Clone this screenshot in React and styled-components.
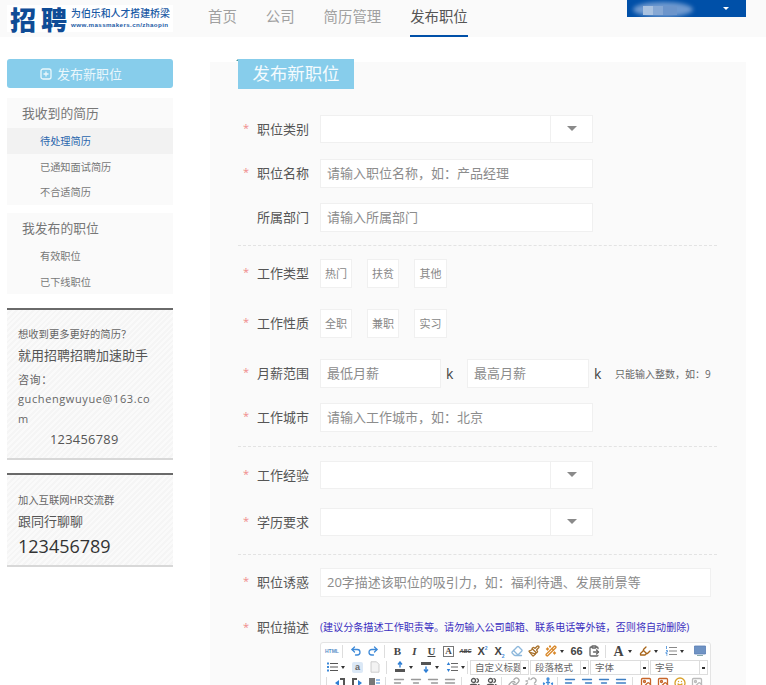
import styled, { createGlobalStyle } from "styled-components";
import {
  Undo2, Redo2, Eraser, Paintbrush, Wand2, ClipboardPaste, Highlighter, AlignLeft, AlignCenter,
  AlignRight, AlignJustify, Link, Unlink, Anchor, Smile, Image, Users,
} from "lucide-react";

const GlobalStyle = createGlobalStyle`
  html, body {
    margin: 0;
    padding: 0;
    background: #fff;
    overflow: hidden;
  }
  body {
    font-family: "Open Sans", "Noto Sans CJK SC", sans-serif;
    color: #555;
  }
  * { box-sizing: border-box; }
`;

const blue = "#0050a8";
const sky = "#87cdeb";

// toolbar drawings the icon packages have no match for
const BulletList = () => (
  <svg viewBox="0 0 12 12">
    <path d="M4 2.5h8M4 6h8M4 9.5h8" stroke="#555" strokeWidth="1" fill="none" />
    <path d="M1 1.5h2v2H1zM1 5h2v2H1zM1 8.5h2v2H1z" fill="#3f8ad8" stroke="none" />
  </svg>
);

const NumberList = () => (
  <svg viewBox="0 0 12 12">
    <path d="M4 2.5h8M4 6h8M4 9.5h8" stroke="#888" strokeWidth="1" fill="none" />
    <path d="M1.5 1v3M1 5.5h1.5v1.5H1v1.5h1.5M1 10h1.5" stroke="#3f8ad8" strokeWidth=".8" fill="none" />
  </svg>
);

const SpaceBefore = () => (
  <svg viewBox="0 0 12 12">
    <path d="M1 8h10v3H1z" fill="#555" stroke="none" />
    <path d="M6 6.5V2M4 3.5 6 1l2 2.5" stroke="#2f7fd4" strokeWidth="1.4" fill="none" />
  </svg>
);

const SpaceAfter = () => (
  <svg viewBox="0 0 12 12">
    <path d="M1 1h10v3H1z" fill="#555" stroke="none" />
    <path d="M6 5.500V10M4 8.500 6 11l2-2.500" stroke="#2f7fd4" strokeWidth="1.4" fill="none" />
  </svg>
);

const LineSpace = () => (
  <svg viewBox="0 0 12 12">
    <path d="M5 2.500h7M5 6h7M5 9.500h7" stroke="#666" strokeWidth="1" fill="none" />
    <path d="M2.500 1 4.200 4H.8zM2.500 11 .8 8h3.400z" fill="#2f7fd4" stroke="none" />
  </svg>
);

const Screen = () => (
  <svg viewBox="0 0 12 12">
    <path d="M.5 1h11v8H.5z" fill="#6f93c4" stroke="#5a7fb5" strokeWidth=".8" />
    <path d="M3 10.500h6" stroke="#8aa" strokeWidth="1" fill="none" />
  </svg>
);

const Sheet = () => (
  <svg viewBox="0 0 12 12">
    <path d="M2 .8h5.500L10 3.300v7.900H2z" fill="#f3f3f3" stroke="#c8c8c8" strokeWidth=".9" />
  </svg>
);

const Indent = ({ flip }) => (
  <svg viewBox="0 0 12 12">
    <path d="M6 1h5v10H9V3H6z" fill="#555" stroke="none" transform={flip ? "matrix(-1 0 0 1 12 0)" : undefined} />
    <path d={flip ? "M11 6 7 3v6z" : "M1 6 5 3v6z"} fill="#2f7fd4" stroke="none" />
  </svg>
);

const Block = () => (
  <svg viewBox="0 0 12 12">
    <path d="M1 1h6v10H1z" fill="#777" stroke="none" />
    <path d="M8 3h4M8 6h4M8 9h4" stroke="#2f7fd4" strokeWidth="1" fill="none" />
  </svg>
);

function App() {
  return (
    <Page>
      <GlobalStyle />
      <Header>
        <Logo>
          <LogoMark>招聘</LogoMark>
          <LogoText>
            <strong>为伯乐和人才搭建桥梁</strong>
            <small>www.massmakers.cn/zhaopin</small>
          </LogoText>
        </Logo>
        <Nav>
          <NavItem>首页</NavItem>
          <NavItem>公司</NavItem>
          <NavItem>简历管理</NavItem>
          <NavItem $active>发布职位</NavItem>
        </Nav>
        <UserBox>
          <UserSmudge />
          <UserPixels />
          <Caret />
        </UserBox>
      </Header>

      <Body>
        <Sidebar>
          <PublishButton>
            <svg width="12" height="12" viewBox="0 0 12 12" fill="none" stroke="#eaf7fc" strokeWidth="1.3">
              <rect x="1" y="1" width="10" height="10" rx="2" />
              <path d="M3.5 6h5M6 3.5v5" />
            </svg>
            发布新职位
          </PublishButton>

          <MenuGroup>
            <MenuTitle>我收到的简历</MenuTitle>
            <MenuItem $active>待处理简历</MenuItem>
            <MenuItem>已通知面试简历</MenuItem>
            <MenuItem>不合适简历</MenuItem>
          </MenuGroup>
          <MenuGroup>
            <MenuTitle>我发布的职位</MenuTitle>
            <MenuItem>有效职位</MenuItem>
            <MenuItem>已下线职位</MenuItem>
          </MenuGroup>

          <PromoCard>
            <PromoSmall>想收到更多更好的简历？</PromoSmall>
            <PromoLine>就用招聘招聘加速助手</PromoLine>
            <Contact>
              <ContactLabel>咨询：</ContactLabel>
              guchengwuyue@163.com
              <ContactPhone>123456789</ContactPhone>
            </Contact>
          </PromoCard>
          <PromoCard $second>
            <PromoSmall>加入互联网HR交流群</PromoSmall>
            <PromoLine>跟同行聊聊</PromoLine>
            <BigNumber>123456789</BigNumber>
          </PromoCard>
        </Sidebar>

        <Main>
          <TitleTab>发布新职位</TitleTab>

          <Row $top={26}>
            <Label $required>职位类别</Label>
            <SelectField />
          </Row>
          <Row $top={16}>
            <Label $required>职位名称</Label>
            <Input $width={273} placeholder="请输入职位名称，如：产品经理" />
          </Row>
          <Row $top={15}>
            <Label>所属部门</Label>
            <Input $width={273} placeholder="请输入所属部门" />
          </Row>
          <Divider $before={13} $after={13} />

          <Row>
            <Label $required>工作类型</Label>
            <Tags>
              <Tag>热门</Tag>
              <Tag>扶贫</Tag>
              <Tag $wide>其他</Tag>
            </Tags>
          </Row>
          <Row $top={21}>
            <Label $required>工作性质</Label>
            <Tags>
              <Tag>全职</Tag>
              <Tag>兼职</Tag>
              <Tag $wide>实习</Tag>
            </Tags>
          </Row>
          <Row $top={21}>
            <Label $required>月薪范围</Label>
            <Input $width={121} placeholder="最低月薪" />
            <Unit>k</Unit>
            <Input $width={122} placeholder="最高月薪" />
            <Unit>k</Unit>
            <Hint>只能输入整数，如：9</Hint>
          </Row>
          <Row $top={15}>
            <Label $required>工作城市</Label>
            <Input $width={273} placeholder="请输入工作城市，如：北京" />
          </Row>
          <Divider $before={14} $after={14} />

          <Row>
            <Label $required>工作经验</Label>
            <SelectField />
          </Row>
          <Row $top={19}>
            <Label $required>学历要求</Label>
            <SelectField />
          </Row>
          <Divider $before={18} $after={13} />

          <Row>
            <Label $required>职位诱惑</Label>
            <Input $width={391} placeholder="20字描述该职位的吸引力，如：福利待遇、发展前景等" />
          </Row>

          <DescribeRow>
            <Label $required>职位描述</Label>
            <DescribeBody>
              <DescribeHint>(建议分条描述工作职责等。请勿输入公司邮箱、联系电话等外链，否则将自动删除)</DescribeHint>
              <Editor>
                <ToolRow>
                  <HtmlTag>HTML</HtmlTag>
                  <Sep />
                  <Tool $c="#3f8ad8"><Undo2 /></Tool>
                  <Tool $c="#3f8ad8"><Redo2 /></Tool>
                  <Sep />
                  <Letter>B</Letter>
                  <Letter $italic>I</Letter>
                  <Letter $underline>U</Letter>
                  <Tool><BoxedA>A</BoxedA></Tool>
                  <Tool><Strike>ABC</Strike></Tool>
                  <Letter $sans>X<sup>2</sup></Letter>
                  <Letter $sans>X<sub>2</sub></Letter>
                  <Tool $c="#8db8dc"><Eraser /></Tool>
                  <Tool $c="#a8702a"><Paintbrush /></Tool>
                  <Tool $c="#d9892b"><Wand2 /></Tool>
                  <Drop />
                  <Letter $sans>66</Letter>
                  <Tool $c="#666"><ClipboardPaste /></Tool>
                  <Sep />
                  <Letter $large>A</Letter>
                  <Drop />
                  <Tool $c="#a8651a"><Highlighter /></Tool>
                  <Drop />
                  <Tool><NumberList /></Tool>
                  <Drop />
                  <Tool $push><Screen /></Tool>
                </ToolRow>
                <ToolRow>
                  <Tool><BulletList /></Tool>
                  <Drop />
                  <Tool><SmallA>a</SmallA></Tool>
                  <Tool><Sheet /></Tool>
                  <Sep />
                  <Tool><SpaceBefore /></Tool>
                  <Drop />
                  <Tool><SpaceAfter /></Tool>
                  <Drop />
                  <Tool><LineSpace /></Tool>
                  <Drop $end />
                  <Sep $tight />
                  <ToolSelects>
                    <ToolSelect>自定义标题</ToolSelect>
                    <ToolSelect>段落格式</ToolSelect>
                    <ToolSelect>字体</ToolSelect>
                    <ToolSelect $narrow>字号</ToolSelect>
                  </ToolSelects>
                </ToolRow>
                <ToolRow>
                  <Sep $flush />
                  <Tool><Indent /></Tool>
                  <Tool><Indent flip /></Tool>
                  <Tool><Block /></Tool>
                  <Sep />
                  <Tool $c="#999"><AlignLeft /></Tool>
                  <Tool $c="#999"><AlignCenter /></Tool>
                  <Tool $c="#999"><AlignRight /></Tool>
                  <Tool $c="#999"><AlignJustify /></Tool>
                  <Sep />
                  <Tool $c="#555"><Users /></Tool>
                  <Tool $c="#555"><Users /></Tool>
                  <Sep $tight />
                  <Tool $c="#aaa"><Link /></Tool>
                  <Tool $c="#aaa"><Unlink /></Tool>
                  <Tool $c="#3f8ad8"><Anchor /></Tool>
                  <Sep $tight />
                  <Tool $c="#3f7fc4"><AlignLeft /></Tool>
                  <Tool $c="#3f7fc4"><AlignRight /></Tool>
                  <Tool $c="#3f7fc4"><AlignCenter /></Tool>
                  <Tool $c="#3f7fc4"><AlignJustify /></Tool>
                  <Sep />
                  <Tool $c="#c8662a"><Image /></Tool>
                  <Tool $c="#c8662a"><Image /></Tool>
                  <Tool $c="#d9a12b"><Smile /></Tool>
                  <Tool $c="#bbb"><Image /></Tool>
                </ToolRow>
              </Editor>
            </DescribeBody>
          </DescribeRow>
        </Main>
      </Body>
    </Page>
  );
}

export default App;

const Page = styled.div`
  width: 766px;
  height: 685px;
  overflow: hidden;
  background: #fff;
`;

const Header = styled.header`
  display: flex;
  align-items: flex-start;
  height: 37px;
  padding: 0 20px 0 7px;
  background: #fafafa;
`;

const Logo = styled.div`
  display: flex;
  align-items: center;
  width: 166px;
  height: 27px;
  margin-top: 5px;
  padding-left: 3px;
  background: #fff;
`;

const LogoMark = styled.div`
  font-family: "Noto Sans CJK SC", sans-serif;
  font-size: 26px;
  font-weight: 900;
  letter-spacing: 5px;
  line-height: 27px;
  color: #0f4c96;
`;

const LogoText = styled.div`
  display: flex;
  flex-direction: column;
  margin-left: -1px;
  color: #1a5aa5;
  line-height: 1;

  strong {
    font-family: "Noto Sans CJK SC", sans-serif;
    font-size: 9.9px;
    font-weight: 500;
    white-space: nowrap;
  }

  small {
    margin-top: 3px;
    font-family: "Liberation Sans", sans-serif;
    font-size: 6.2px;
    font-weight: 700;
    letter-spacing: 0.4px;
    white-space: nowrap;
  }
`;

const Nav = styled.nav`
  display: flex;
  gap: 29px;
  margin-left: 35px;
`;

const NavItem = styled.a`
  display: block;
  height: 37px;
  padding-top: 6px;
  font-size: 14.4px;
  line-height: 21px;
  color: ${(p) => (p.$active ? "#555" : "#a0a0a0")};
  border-bottom: 2px solid ${(p) => (p.$active ? blue : "transparent")};
`;

const UserBox = styled.div`
  position: relative;
  width: 119px;
  height: 17px;
  margin-left: auto;
  overflow: hidden;
  background: ${blue};
`;

const UserSmudge = styled.div`
  position: absolute;
  left: 6px;
  top: 2px;
  width: 60px;
  height: 15px;
  border-radius: 50%;
  background: #6f9ad0;
  filter: blur(2px);
`;

const UserPixels = styled.div`
  position: absolute;
  left: 16px;
  top: 6px;
  width: 34px;
  height: 9px;
  background: linear-gradient(90deg, #a9c2e0 0 30%, #86a8d4 30% 60%, #6c95cb 60%);
`;

const Caret = styled.i`
  position: absolute;
  left: 96px;
  top: 7px;
  border: 3px solid transparent;
  border-top: 3px solid #fff;
`;

const Body = styled.div`
  display: flex;
  align-items: flex-start;
  gap: 37px;
  padding: 22px 0 0 7px;
`;

const Sidebar = styled.aside`
  flex: none;
  width: 166px;
`;

const PublishButton = styled.button`
  display: flex;
  align-items: center;
  gap: 5px;
  width: 100%;
  height: 29px;
  padding: 0 0 0 33px;
  border: 0;
  border-radius: 3px;
  background: ${sky};
  color: #eaf7fc;
  font-family: inherit;
  font-size: 13px;
`;

const MenuGroup = styled.div`
  margin-top: 10px;
  background: #fafafa;

  & + & {
    margin-top: 8px;
  }
`;

const MenuTitle = styled.div`
  height: 30px;
  padding-left: 15px;
  font-size: 12.8px;
  line-height: 30px;
  color: #777;
`;

const MenuItem = styled.div`
  height: 25.67px;
  padding-left: 33px;
  font-size: 10.2px;
  line-height: 26px;
  color: ${(p) => (p.$active ? "#2a66ad" : "#777")};
  background: ${(p) => (p.$active ? "#f2f2f2" : "transparent")};
`;

const PromoCard = styled.div`
  margin-top: ${(p) => (p.$second ? "13px" : "14px")};
  height: ${(p) => (p.$second ? "94px" : "152px")};
  padding: ${(p) => (p.$second ? "17px 0 0 11px" : "16px 0 0 11px")};
  border-top: 2px solid #6a6a6a;
  border-bottom: 2px solid #d8d8d8;
  background: repeating-linear-gradient(135deg, #fafafa 0 2px, #f5f5f5 2px 4px);
`;

const PromoSmall = styled.div`
  font-size: 10.3px;
  line-height: 16px;
  color: #666;
`;

const PromoLine = styled.div`
  margin-top: 3px;
  font-size: 13px;
  line-height: 20px;
  color: #555;
`;

const Contact = styled.div`
  width: 140px;
  margin-top: 5px;
  font-size: 11px;
  line-height: 20px;
  color: #666;
  letter-spacing: 0.6px;
  word-break: break-all;
`;

const ContactLabel = styled.div`
  height: 19px;
  overflow: hidden;
`;

const ContactPhone = styled.div`
  padding-left: 32px;
  font-size: 12.8px;
  letter-spacing: 0.3px;
  color: #555;
`;

const BigNumber = styled.div`
  margin-top: 2px;
  font-size: 18px;
  line-height: 26px;
  color: #333;
`;

const Main = styled.main`
  flex: none;
  width: 536px;
  height: 640px;
  margin-top: 3px;
  padding: 0 29px 0 28px;
  background: #fafafa;
`;

const TitleTab = styled.h2`
  position: relative;
  width: 116px;
  height: 30px;
  margin: -3px 0 0;
  background: ${sky};
  color: #f4fbfe;
  font-size: 17.4px;
  font-weight: 400;
  line-height: 29px;
  text-align: center;

  &::before {
    content: "";
    position: absolute;
    left: -2px;
    top: 0;
    border-right: 2px solid #4f9a9a;
    border-top: 2px solid transparent;
  }
`;

const Row = styled.div`
  display: flex;
  align-items: center;
  margin-top: ${(p) => p.$top || 0}px;
`;

const Label = styled.label`
  position: relative;
  flex: none;
  width: 82px;
  padding: 0 0 2px 19px;
  font-size: 13px;
  white-space: nowrap;
  color: #555;

  &::before {
    content: ${(p) => (p.$required ? '"*"' : '""')};
    position: absolute;
    left: 5px;
    top: 1px;
    color: #f08a8a;
    font-size: 11px;
  }
`;

const Input = styled.input`
  flex: none;
  width: ${(p) => p.$width}px;
  height: 29px;
  padding: 0 6px 1px;
  border: 1px solid #f0f0f0;
  background: #fff;
  font-family: inherit;
  font-size: 13px;
  color: #555;
  outline: none;

  &::placeholder {
    color: #8c8c8c;
    opacity: 1;
  }
`;

function SelectField() {
  return (
    <SelectWrap>
      <SelectValue />
      <SelectButton>
        <i />
      </SelectButton>
    </SelectWrap>
  );
}

const SelectWrap = styled.div`
  display: flex;
  width: 273px;
  height: 28px;
  border: 1px solid #f0f0f0;
  background: #fff;
`;

const SelectValue = styled.div`
  flex: 1;
  border-right: 1px solid #f0f0f0;
`;

const SelectButton = styled.div`
  display: flex;
  align-items: center;
  justify-content: center;
  width: 41px;

  i {
    margin-top: 4px;
    border: 5px solid transparent;
    border-top: 5px solid #8a8a8a;
  }
`;

const Divider = styled.div`
  margin: ${(p) => p.$before}px 0 ${(p) => p.$after}px;
  border-top: 1px dashed #e3e3e3;
`;

const Tags = styled.div`
  display: flex;
  gap: 15px;
`;

const Tag = styled.div`
  width: ${(p) => (p.$wide ? "33px" : "32px")};
  height: 29px;
  border: 1px solid #f0f0f0;
  background: #fff;
  font-size: 11px;
  line-height: 27px;
  text-align: center;
  color: #888;
`;

const Unit = styled.span`
  flex: none;
  width: 26px;
  padding-left: 5px;
  font-size: 14px;
  color: #444;
`;

const Hint = styled.span`
  font-size: 10px;
  color: #666;
  white-space: nowrap;
`;

const DescribeRow = styled.div`
  display: flex;
  margin-top: 23px;

  ${Label} {
    padding-bottom: 0;
    line-height: 14px;

    &::before {
      top: 0;
    }
  }
`;

const DescribeBody = styled.div`
  flex: none;
  width: 391px;
`;

const DescribeHint = styled.div`
  font-size: 10.1px;
  line-height: 14px;
  color: #3a2fc0;
  white-space: nowrap;
`;

const Editor = styled.div`
  margin-top: 8px;
  padding: 0 3px;
  border: 1px solid #e4e4e4;
  border-radius: 3px;
  background: #fff;
`;

const ToolRow = styled.div`
  display: flex;
  align-items: center;
  gap: 2px;
  height: 16px;
  white-space: nowrap;
`;

const Tool = styled.span`
  display: flex;
  flex: none;
  align-items: center;
  justify-content: center;
  width: 15px;
  height: 15px;
  margin-left: ${(p) => (p.$push ? "auto" : "0")};
  color: ${(p) => p.$c || "#444"};

  svg {
    width: 12px;
    height: 12px;
    stroke-width: 2.6;
  }
`;

const Letter = styled.span`
  flex: none;
  width: 15px;
  font-family: ${(p) => (p.$sans ? '"Liberation Sans"' : '"Liberation Serif"')}, sans-serif;
  font-size: ${(p) => (p.$large ? "14px" : "11px")};
  font-style: ${(p) => (p.$italic ? "italic" : "normal")};
  font-weight: 700;
  line-height: 15px;
  text-align: center;
  text-decoration: ${(p) => (p.$underline ? "underline" : "none")};
  color: #444;

  sup, sub {
    font-size: 5px;
    line-height: 0;
    color: #3f8ad8;
  }
`;

const HtmlTag = styled.span`
  flex: none;
  width: 13px;
  margin-left: 1px;
  font-family: "Liberation Sans", sans-serif;
  font-size: 5px;
  font-weight: 700;
  color: #5a8fc8;
`;

const BoxedA = styled.span`
  width: 11px;
  height: 11px;
  border: 1px solid #777;
  font-family: "Liberation Serif", serif;
  font-size: 9px;
  font-weight: 700;
  line-height: 9px;
  text-align: center;
  color: #444;
`;

const Strike = styled.span`
  font-family: "Liberation Sans", sans-serif;
  font-size: 5.5px;
  font-weight: 700;
  font-style: italic;
  text-decoration: line-through;
  color: #444;
`;

const SmallA = styled.span`
  width: 11px;
  height: 11px;
  border-radius: 2px;
  background: #dbe8f6;
  font-family: "Liberation Sans", sans-serif;
  font-size: 9px;
  font-weight: 700;
  line-height: 10px;
  text-align: center;
  color: #666;
`;

const Drop = styled.i`
  flex: none;
  width: 0;
  height: 0;
  margin: 3px ${(p) => (p.$end ? "0" : "3px")} 0 0;
  border: 2px solid transparent;
  border-top: 3px solid #333;
`;

const Sep = styled.i`
  flex: none;
  width: 1px;
  height: 13px;
  margin: ${(p) => (p.$tight ? "0 2px 0 0" : "0 3px 0 2px")};
  background: #ddd;
`;

const ToolSelects = styled.div`
  display: flex;
  gap: 1px;
  margin-left: -2px;
`;

const ToolSelect = styled.span`
  position: relative;
  flex: none;
  width: ${(p) => (p.$narrow ? "58px" : "59px")};
  height: 15px;
  padding-left: 4px;
  border: 1px solid #ddd;
  font-size: 9.5px;
  line-height: 13px;
  color: #666;
  overflow: hidden;

  &::after {
    content: "";
    position: absolute;
    right: 0;
    top: 0;
    width: 7px;
    height: 13px;
    border-left: 1px solid #ddd;
    background: linear-gradient(#333, #333) center 6px / 3px 2px no-repeat #fff;
  }
`;
